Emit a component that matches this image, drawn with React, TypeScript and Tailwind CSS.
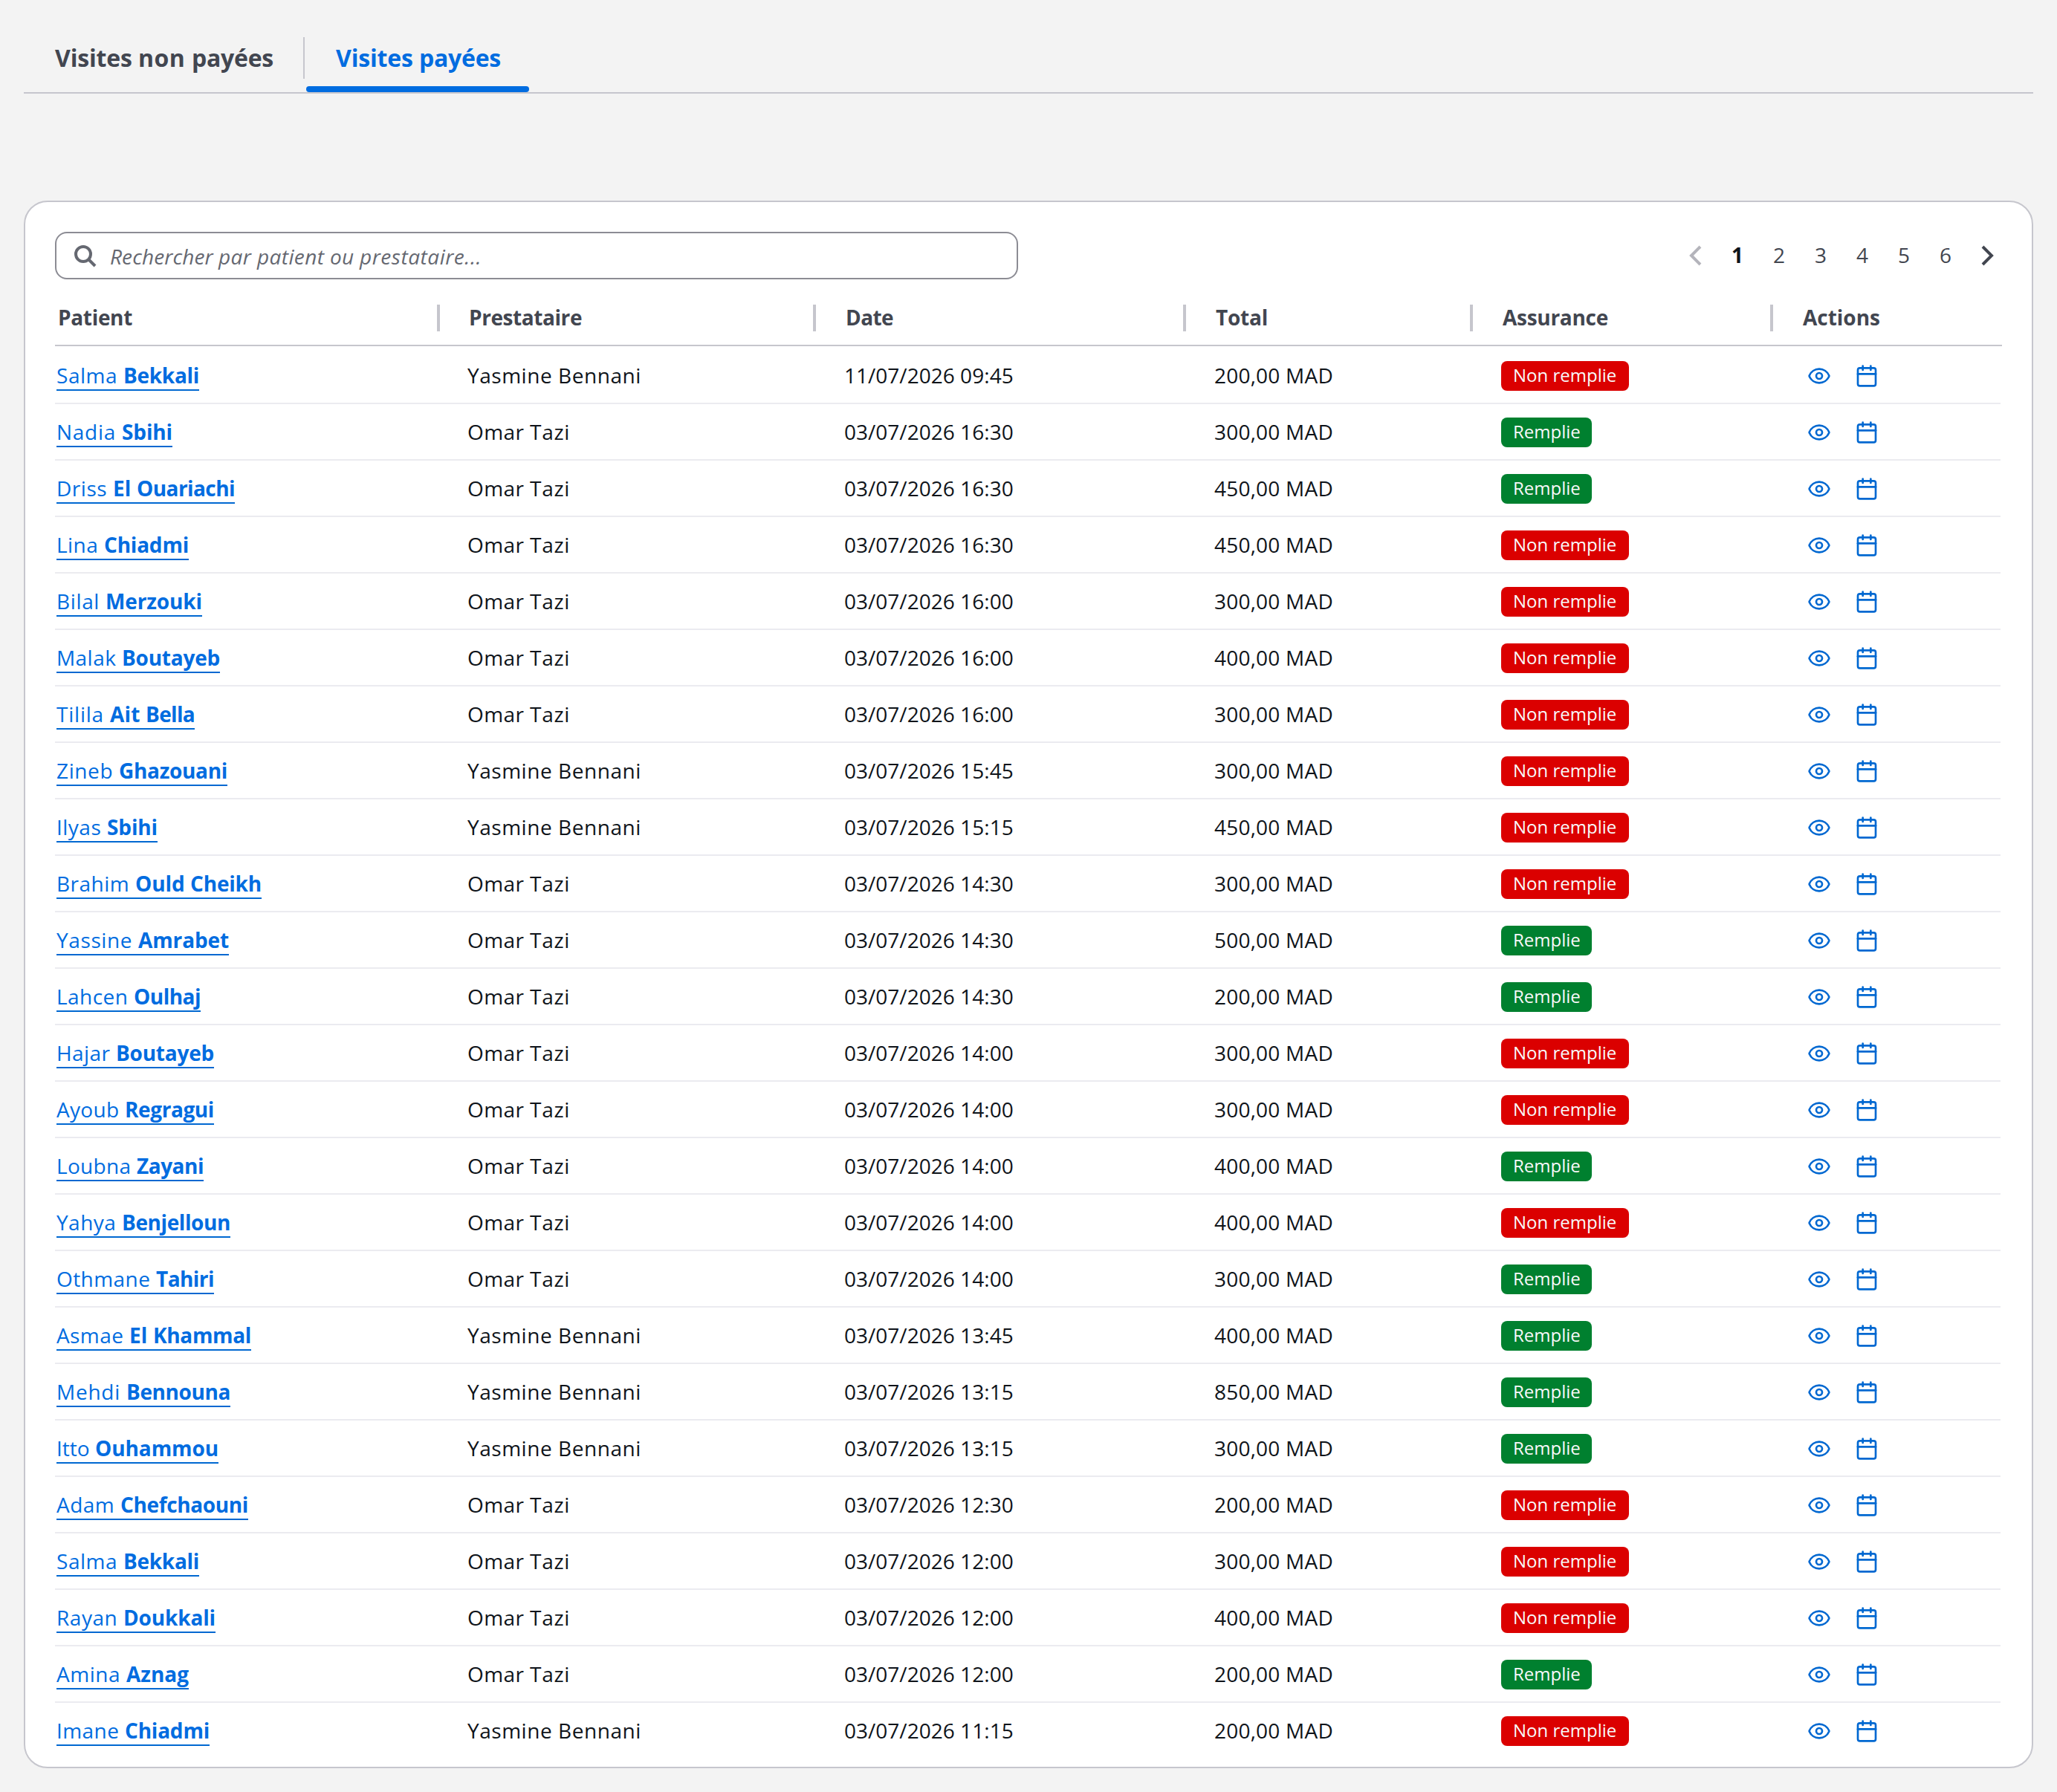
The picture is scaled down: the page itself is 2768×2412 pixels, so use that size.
import React from "react";
import { Calendar, Eye } from "lucide-react";

type Visit = {
  first: string;
  last: string;
  provider: string;
  date: string;
  total: string;
  filled: boolean;
};

const Y = "Yasmine Bennani";
const O = "Omar Tazi";

const v = (first: string, last: string, provider: string, date: string, total: number, filled: boolean): Visit => ({
  first,
  last,
  provider,
  date,
  total: `${total},00 MAD`,
  filled,
});

const visits: Visit[] = [
  v("Salma", "Bekkali", Y, "11/07/2026 09:45", 200, false),
  v("Nadia", "Sbihi", O, "03/07/2026 16:30", 300, true),
  v("Driss", "El Ouariachi", O, "03/07/2026 16:30", 450, true),
  v("Lina", "Chiadmi", O, "03/07/2026 16:30", 450, false),
  v("Bilal", "Merzouki", O, "03/07/2026 16:00", 300, false),
  v("Malak", "Boutayeb", O, "03/07/2026 16:00", 400, false),
  v("Tilila", "Ait Bella", O, "03/07/2026 16:00", 300, false),
  v("Zineb", "Ghazouani", Y, "03/07/2026 15:45", 300, false),
  v("Ilyas", "Sbihi", Y, "03/07/2026 15:15", 450, false),
  v("Brahim", "Ould Cheikh", O, "03/07/2026 14:30", 300, false),
  v("Yassine", "Amrabet", O, "03/07/2026 14:30", 500, true),
  v("Lahcen", "Oulhaj", O, "03/07/2026 14:30", 200, true),
  v("Hajar", "Boutayeb", O, "03/07/2026 14:00", 300, false),
  v("Ayoub", "Regragui", O, "03/07/2026 14:00", 300, false),
  v("Loubna", "Zayani", O, "03/07/2026 14:00", 400, true),
  v("Yahya", "Benjelloun", O, "03/07/2026 14:00", 400, false),
  v("Othmane", "Tahiri", O, "03/07/2026 14:00", 300, true),
  v("Asmae", "El Khammal", Y, "03/07/2026 13:45", 400, true),
  v("Mehdi", "Bennouna", Y, "03/07/2026 13:15", 850, true),
  v("Itto", "Ouhammou", Y, "03/07/2026 13:15", 300, true),
  v("Adam", "Chefchaouni", O, "03/07/2026 12:30", 200, false),
  v("Salma", "Bekkali", O, "03/07/2026 12:00", 300, false),
  v("Rayan", "Doukkali", O, "03/07/2026 12:00", 400, false),
  v("Amina", "Aznag", O, "03/07/2026 12:00", 200, true),
  v("Imane", "Chiadmi", Y, "03/07/2026 11:15", 200, false),
];

const headers = [
  { label: "Patient", pad: "pl-0.5" },
  { label: "Prestataire", pad: "pl-[19.5px]" },
  { label: "Date", pad: "pl-5" },
  { label: "Total", pad: "pl-5" },
  { label: "Assurance", pad: "pl-5" },
  { label: "Actions", pad: "pl-5" },
];

const columns = "grid grid-cols-[259px_253px_249px_193px_202px_1fr]";

const REGULAR = "14px 'Open Sans'";
const ITALIC = "italic 14px 'Open Sans'";
const BOLD = "bold 14px 'Open Sans'";
const TAB = "bold 16px 'Open Sans'";

const pen = document.createElement("canvas").getContext("2d");

// Average spacing that gives a word the width of its glyphs' whole-pixel advances.
function tracking(word: string, font: string) {
  if (!pen) return 0;
  pen.font = font;
  const slack = [...word].reduce((sum, ch) => {
    const w = pen.measureText(ch).width;
    return sum + Math.round(w) - w;
  }, 0);
  return slack / word.length;
}

// Text whose words are each spaced to whole-pixel advances.
function Tracked({ text, font }: { text: string; font: string }) {
  const words = text.match(/\S+\s*/g) ?? [];
  return (
    <span className="whitespace-pre">
      {words.map((word, i) => (
        <span key={i} style={{ letterSpacing: tracking(word, font) }}>
          {word}
        </span>
      ))}
    </span>
  );
}

function Chevron({ d, className }: { d: string; className: string }) {
  return (
    <button className="flex w-7 items-center justify-center">
      <svg viewBox="0 0 16 16" className={`size-4 ${className}`} fill="none" stroke="currentColor" strokeWidth={2}>
        <path d={d} />
      </svg>
    </button>
  );
}

function Tabs() {
  return (
    <div className="flex h-[46px] border-b border-[#c6c6cd] text-base leading-5 font-bold">
      <div className="flex w-[189px] justify-between">
        <button className="mt-2 h-7 pl-[21px] whitespace-nowrap text-[#424650]">
          <Tracked text="Visites non payées" font={TAB} />
        </button>
        <span className="mt-2 h-7 w-px bg-[#c6c6cd]" />
      </div>
      <div className="ml-px flex w-[150px] flex-col justify-between pt-2">
        <button className="h-7 px-5 text-left whitespace-nowrap text-[#006ce0]">
          <Tracked text="Visites payées" font={TAB} />
        </button>
        <span className="h-1 rounded-xs bg-[#006ce0]" />
      </div>
    </div>
  );
}

function Toolbar() {
  return (
    <div className="flex h-8 items-center justify-between">
      <div className="flex h-8 w-[648px] items-center gap-[9px] rounded-lg border border-[#8c8c94] pl-[11px]">
        <svg viewBox="0 0 16 16" className="size-4 text-[#656871]" fill="none" stroke="currentColor" strokeWidth={2}>
          <circle cx="7" cy="7" r="5" />
          <path d="m15 15-4.5-4.5" />
        </svg>
        <span className="pt-0.5 text-[#656871] italic">
          <Tracked text="Rechercher par patient ou prestataire..." font={ITALIC} />
        </span>
      </div>
      <div className="-mr-1 flex text-[#424650]">
        <Chevron d="m11 2-6 6 6 6" className="text-[#b4b4bb]" />
        {[1, 2, 3, 4, 5, 6].map((n) => (
          <button key={n} className={n === 1 ? "w-7 font-bold text-[#0f141a]" : "w-7"}>
            {n}
          </button>
        ))}
        <Chevron d="m5 2 6 6-6 6" className="text-[#424650]" />
      </div>
    </div>
  );
}

function Row({ visit }: { visit: Visit }) {
  return (
    <div className={`${columns} h-[38px] items-center border-b border-[#ebebf0] pt-px last:border-transparent`}>
      <div className="pl-px">
        <a className="border-b border-[#0068d1] text-[#006ce0]">
          <Tracked text={`${visit.first} `} font={REGULAR} />
          <b>
            <Tracked text={visit.last} font={BOLD} />
          </b>
        </a>
      </div>
      <div className="pl-[18.5px]">
        <Tracked text={visit.provider} font={REGULAR} />
      </div>
      <div className="pl-[19px]">
        <Tracked text={visit.date} font={REGULAR} />
      </div>
      <div className="pl-[19px]">
        <Tracked text={visit.total} font={REGULAR} />
      </div>
      <div className="flex pl-[19px]">
        <span
          className={`h-5 rounded px-2 text-xs leading-5 text-[#f9f9fa] ${visit.filled ? "bg-[#00802f]" : "bg-[#db0000]"}`}
        >
          {visit.filled ? "Remplie" : "Non remplie"}
        </span>
      </div>
      <div className="flex gap-4 pl-[23px] text-[#0068d1]">
        <Eye className="size-4" />
        <Calendar className="size-4" />
      </div>
    </div>
  );
}

export default function App() {
  return (
    <div className="h-[2412px] w-[2768px] overflow-hidden bg-[#f3f3f3]">
      <div className="h-[1206px] w-[1384px] origin-top-left scale-200 px-4 pt-[17px] font-['Open_Sans',sans-serif] text-sm leading-5 text-[#0f141a]">
        <Tabs />
        <div className="mt-[72px] h-[1055px] rounded-2xl border border-[#c6c6cd] bg-white px-5 pt-5">
          <Toolbar />
          <div className="mt-[7px]">
            <div className={`${columns} h-[38px] items-center border-b border-[#c6c6cd] font-bold text-[#424650]`}>
              {headers.map(({ label, pad }, i) => (
                <div
                  key={label}
                  className={`flex h-[18px] items-center pt-px ${pad} ${i < 5 ? "border-r-2 border-[#c6c6cd]" : ""}`}
                >
                  <Tracked text={label} font={BOLD} />
                </div>
              ))}
            </div>
            <div className="mr-px pt-px">
              {visits.map((visit, i) => (
                <Row key={i} visit={visit} />
              ))}
            </div>
          </div>
        </div>
      </div>
    </div>
  );
}
